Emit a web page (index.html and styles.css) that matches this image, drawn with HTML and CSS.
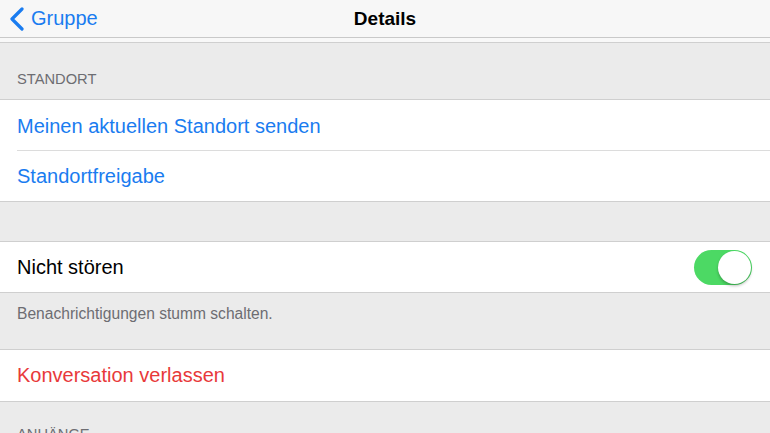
FILE: index.html
```html
<!DOCTYPE html>
<html lang="de">

<head>
    <meta charset="UTF-8">
    <meta name="viewport" content="width=device-width, initial-scale=1.0">
    <title>Details</title>
    <link rel="stylesheet" href="styles.css">
</head>

<body>
    <div class="navbar">
        <div class="back">
            <svg class="chevron" width="16" height="24" viewBox="0 0 16 24">
                <path d="M13 2 L3 12 L13 22" fill="none" stroke="#1a7cf0" stroke-width="3.2" stroke-linecap="round" stroke-linejoin="round"/>
            </svg>
            <span>Gruppe</span>
        </div>
        <div class="title">Details</div>
    </div>

    <div class="content">
        <div class="group cut"></div>

        <div class="section-header">STANDORT</div>
        <div class="group">
            <div class="cell link inset">Meinen aktuellen Standort senden</div>
            <div class="cell link">Standortfreigabe</div>
        </div>

        <div class="spacer"></div>
        <div class="group">
            <div class="cell">
                <span>Nicht stören</span>
                <div class="toggle"><div class="knob"></div></div>
            </div>
        </div>
        <div class="section-footer">Benachrichtigungen stumm schalten.</div>

        <div class="group">
            <div class="cell danger">Konversation verlassen</div>
        </div>

        <div class="section-header last">ANHÄNGE</div>
    </div>
</body>

</html>
```

FILE: styles.css
```css
body {
    font-family: "Liberation Sans", Arial, sans-serif;
    background-color: #ebebeb;
    margin: 0;
    padding: 0;
    overflow: hidden;
}

.navbar {
    height: 37px;
    background-color: #f7f7f7;
    border-bottom: 1px solid #c9c9c9;
    display: flex;
    align-items: center;
    justify-content: center;
    position: relative;
}

.back {
    position: absolute;
    left: 9px;
    top: 0;
    height: 37px;
    display: flex;
    align-items: center;
    gap: 6px;
    color: #1a7cf0;
    font-size: 20px;
}

.title {
    font-size: 19px;
    font-weight: bold;
    color: #000;
}

.group {
    background-color: #fff;
    border-bottom: 1px solid #cfcfcf;
}

.group.cut {
    height: 4px;
    background-color: #f8f8f8;
}

.section-header {
    height: 57px;
    box-sizing: border-box;
    padding: 28px 17px 0;
    font-size: 14.7px;
    color: #6d6d72;
    border-bottom: 1px solid #cfcfcf;
}

.section-header.last {
    padding-top: 24px;
    border-bottom: none;
}

.spacer {
    height: 39px;
    border-bottom: 1px solid #cfcfcf;
}

.cell {
    height: 50px;
    padding: 0 17px;
    display: flex;
    align-items: center;
    justify-content: space-between;
    font-size: 20px;
    color: #000;
    position: relative;
}

.cell.inset {
    height: 51px;
    box-sizing: border-box;
    padding-top: 1px;
}

.cell.inset::after {
    content: "";
    position: absolute;
    left: 17px;
    right: 0;
    bottom: 0;
    border-bottom: 1px solid #dcdcdc;
}

.cell.link {
    color: #1a7cf0;
}

.cell.danger {
    color: #e8393a;
    height: 51px;
}

.section-footer {
    height: 57px;
    box-sizing: border-box;
    padding: 12px 17px 0;
    font-size: 15.6px;
    color: #6d6d72;
    border-bottom: 1px solid #cfcfcf;
}

.toggle {
    width: 58px;
    height: 35px;
    border-radius: 18px;
    background-color: #4cd964;
    position: relative;
    margin-right: 1px;
}

.knob {
    position: absolute;
    right: 1px;
    top: 1px;
    width: 33px;
    height: 33px;
    border-radius: 50%;
    background-color: #fff;
    box-shadow: 0 2px 3px rgba(0, 0, 0, 0.25);
}
```
